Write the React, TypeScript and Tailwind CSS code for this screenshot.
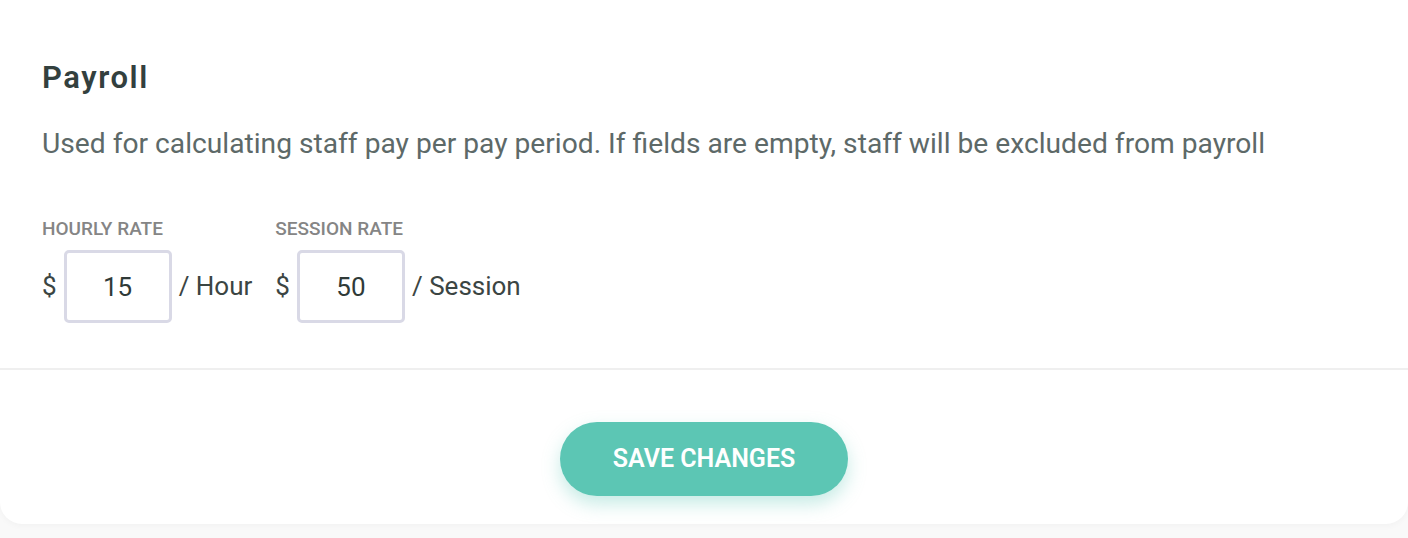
import React from "react";

function RateField({ label, value, unit }: { label: string; value: string; unit: string }) {
  return (
    <div className="flex flex-col">
      <span className="text-[19px] leading-[22px] font-medium uppercase text-[#858585]">{label}</span>
      <div className="mt-[10px] flex items-center">
        <span className="text-[26px] text-[#3b4543]">$</span>
        <input
          defaultValue={value}
          className="ml-[7px] w-[108px] h-[73px] rounded-[5px] border-[3px] border-[#d9d9e6] bg-white text-center text-[26px] text-[#2f3a38] outline-none"
          style={{ fontFamily: "Roboto, sans-serif" }}
        />
        <span className="ml-[7px] text-[26px] text-[#3b4543]">/ {unit}</span>
      </div>
    </div>
  );
}

export default function App() {
  return (
    <div className="h-[538px] w-full bg-[#f9f9f9] overflow-hidden" style={{ fontFamily: "Roboto, 'Liberation Sans', sans-serif" }}>
      <div className="h-[524px] bg-white rounded-b-[22px] shadow-[0_2px_6px_rgba(0,0,0,0.03)] flex flex-col">
        <div className="px-[42px] pt-[60px] pb-[45px]">
          <h2 className="text-[31px] leading-[36px] font-semibold tracking-[0.05em] text-[#33403e]">Payroll</h2>
          <p className="mt-[30px] text-[28.2px] leading-[36px] text-[#5d6968]">
            Used for calculating staff pay per pay period. If fields are empty, staff will be excluded from payroll
          </p>
          <div className="mt-[56px] flex gap-[23px]">
            <RateField label="Hourly Rate" value="15" unit="Hour" />
            <RateField label="Session Rate" value="50" unit="Session" />
          </div>
        </div>
        <div className="h-[2px] bg-[#efefef]" />
        <div className="flex justify-center pt-[52px]">
          <button className="w-[288px] h-[74px] rounded-full bg-[#5cc6b4] text-white text-[25px] font-semibold uppercase shadow-[0_8px_18px_rgba(92,198,180,0.35)]">
            Save Changes
          </button>
        </div>
      </div>
    </div>
  );
}
